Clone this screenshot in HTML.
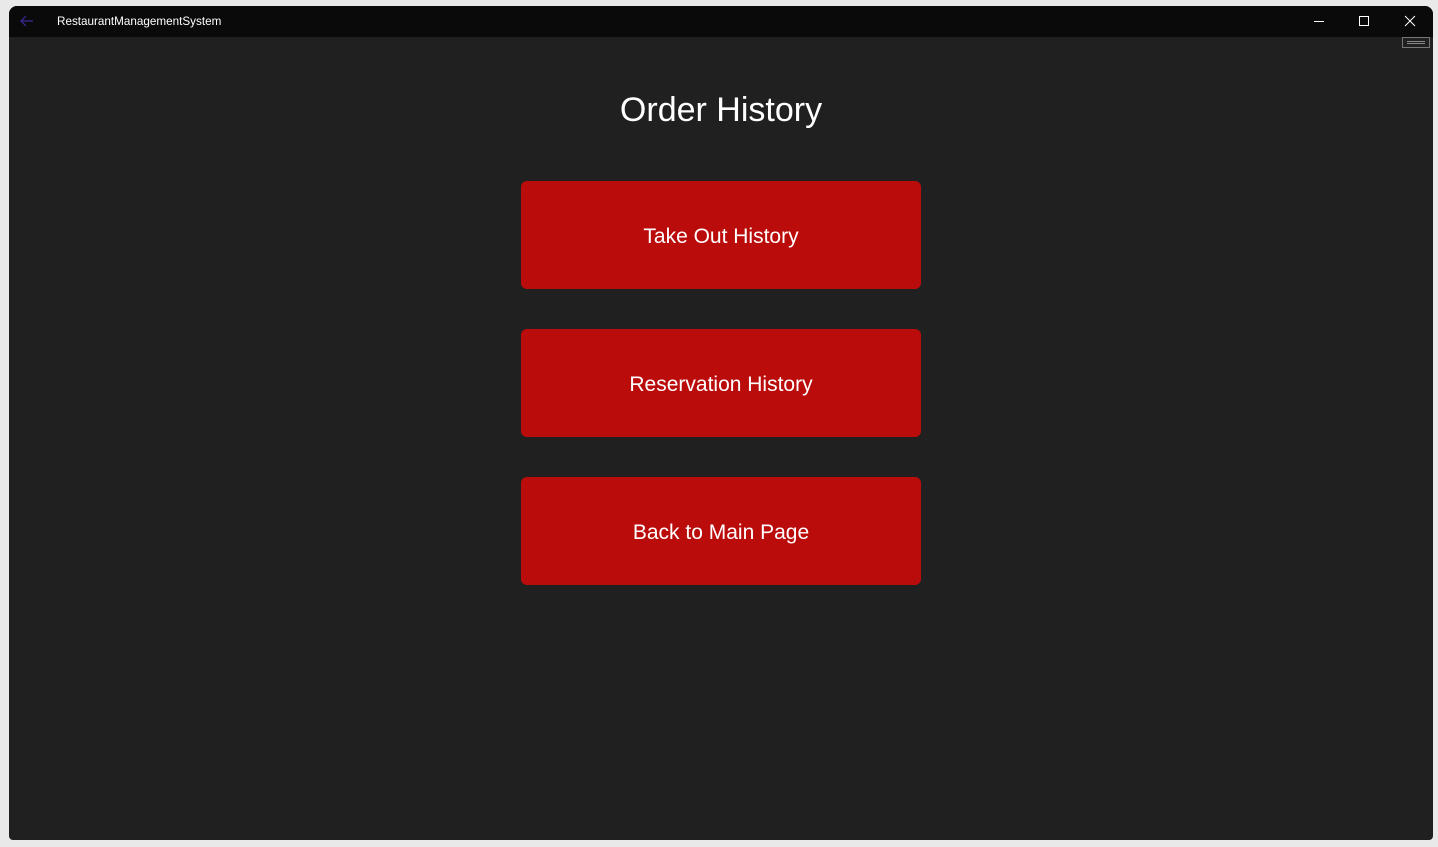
<!DOCTYPE html>
<html><head><meta charset="utf-8"><style>
html,body{margin:0;padding:0;width:1438px;height:847px;background:#e9e9e9;overflow:hidden;font-family:"Liberation Sans",sans-serif;}
.win{position:absolute;left:9px;top:6px;width:1424px;height:834px;background:#202020;border-radius:8px 8px 4px 4px;overflow:hidden;}
.bar{position:absolute;left:0;top:0;width:100%;height:31px;background:#0a0a0a;}
.title{position:absolute;left:48px;top:9px;color:#fff;font-size:11.7px;}
.h{position:absolute;left:0;width:100%;top:85px;text-align:center;color:#fff;font-size:34px;}
.btn{position:absolute;left:512px;width:400px;height:108px;background:#bb0c0c;border-radius:6px;color:#fff;font-size:21px;text-align:center;line-height:112px;}
</style></head><body>
<div class="win">
<div class="bar">
<svg style="position:absolute;left:10px;top:9px" width="16" height="12"><path d="M14 6H2M7 1L2 6l5 5" stroke="#3b2a9a" stroke-width="1.2" fill="none"/></svg>
<div class="title">RestaurantManagementSystem</div>
<svg style="position:absolute;left:1304px;top:10px" width="12" height="12"><path d="M1 5.5h10" stroke="#fff" stroke-width="1"/></svg>
<svg style="position:absolute;left:1349px;top:9px" width="12" height="12"><rect x="1.5" y="1.5" width="9" height="9" fill="none" stroke="#fff" stroke-width="1"/></svg>
<svg style="position:absolute;left:1395px;top:9px" width="12" height="12"><path d="M1 1l10 10M11 1L1 11" stroke="#fff" stroke-width="1"/></svg>
</div>
<div style="position:absolute;left:1393px;top:31px;width:28px;height:11px;border:1px solid #777;box-sizing:border-box;">
<div style="position:absolute;left:4px;right:4px;top:3px;height:1px;background:#888"></div>
<div style="position:absolute;left:4px;right:4px;top:5px;height:1px;background:#888"></div></div>
<div class="h">Order History</div>
<div class="btn" style="top:175px">Take Out History</div>
<div class="btn" style="top:323px">Reservation History</div>
<div class="btn" style="top:471px">Back to Main Page</div>
</div>
</body></html>
